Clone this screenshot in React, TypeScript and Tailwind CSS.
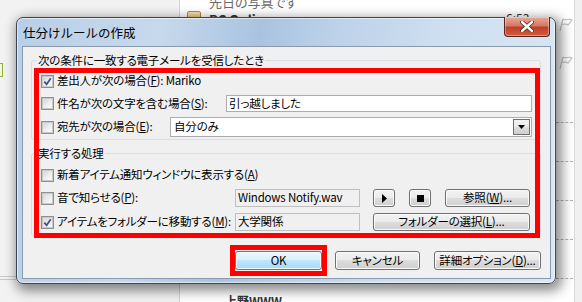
import type { ReactNode } from 'react'

/**
 * 仕分けルールの作成 dialog (Windows 7 style) over an Outlook window,
 * with red annotation boxes.
 */

function Check({ checked }: { checked?: boolean }) {
  return (
    <span className="flex h-[13px] w-[13px] shrink-0 items-center justify-center border border-[#8e8f8f] bg-[#f4f4f4]">
      <span className="flex h-[11px] w-[11px] items-center justify-center border border-[#c9c9c9] bg-[linear-gradient(135deg,#d8d8d8_0%,#eeeeee_60%,#fbfbfb_100%)]">
        {checked && (
          <svg width="9" height="9" viewBox="0 0 9 9">
            <path d="M1.3 4.6 L3.6 7.3 L7.8 1.2" fill="none" stroke="#3e5288" strokeWidth="1.7" />
          </svg>
        )}
      </span>
    </span>
  )
}

function Btn({ children, className = '' }: { children?: ReactNode; className?: string }) {
  return (
    <div
      className={`flex shrink-0 items-center justify-center rounded-[3px] border border-[#707070] bg-[linear-gradient(#f2f2f2_0%,#ebebeb_50%,#dddddd_50%,#cfcfcf_100%)] shadow-[inset_0_0_0_1px_#fbfbfb] leading-none text-black ${className}`}
    >
      {children}
    </div>
  )
}

function Label({ children }: { children: ReactNode }) {
  return <span className="ml-[3px] whitespace-nowrap leading-none">{children}</span>
}

export default function App() {
  return (
    <div className="relative h-[302px] w-[582px] overflow-hidden bg-white font-['Noto_Sans_CJK_JP',sans-serif] text-[12px] text-black [font-feature-settings:'palt']">
      {/* Outlook window behind */}
      <div className="absolute left-0 top-0 h-full w-[180px] border-r border-[#d4d4d4] bg-[#f2f2f2]" />
      <div className="absolute left-0 top-[63px] h-[14px] w-[3px] border border-l-0 border-[#8bb23a] bg-[#f6f6d8]" />
      <div className="absolute left-0 top-[276px] h-[1px] w-[16px] bg-[#c8c8c8]" />
      <div className="absolute left-0 top-[279px] h-[1px] w-[16px] bg-[#c8c8c8]" />
      <div className="absolute left-[209px] top-[-8px] text-[13px] text-[#6a6a6a]">先日の写真です</div>
      <div className="absolute left-[187px] top-[11px] h-[12px] w-[14px] rounded-[2px] border border-[#b08a3a] bg-[linear-gradient(#f6e3b0,#d9b460)]" />
      <div className="absolute left-[209px] top-[10px] text-[13px] font-bold text-[#333]">RC Online</div>
      <div className="absolute left-[506px] top-[9px] text-[12px] text-[#333]">6:53</div>
      <svg className="absolute left-[558px] top-[18px]" width="16" height="14" viewBox="0 0 16 14">
        <path d="M2 13 L5 1 M5 1 C8 3 11 0 14 2 L10 7 C8 5 6 7 4 6" fill="none" stroke="#c4c4c4" strokeWidth="1.2" />
      </svg>
      <svg className="absolute left-[558px] top-[56px]" width="16" height="14" viewBox="0 0 16 14">
        <path d="M2 13 L5 1 M5 1 C8 3 11 0 14 2 L10 7 C8 5 6 7 4 6" fill="none" stroke="#c4c4c4" strokeWidth="1.2" />
      </svg>
      {[122, 161, 200, 239, 278].map((y) => (
        <div key={y} className="absolute left-[556px] h-0 w-[17px] border-t border-dashed border-[#b4b4b4]" style={{ top: y }} />
      ))}
      <div className="absolute right-0 top-0 h-full w-[8px] border-l border-[#dadada] bg-[#f0f0f0]" />
      <div className="absolute left-[225px] top-[292px] text-[12px] font-bold text-[#333]">上野WWW</div>

      {/* Dialog */}
      <div className="absolute left-[16px] top-[17px] z-10 flex h-[267px] w-[540px] flex-col rounded-[7px] border border-[#3a4656] bg-[linear-gradient(100deg,#b9cfe7_0%,#c6d9ed_25%,#a9c3df_42%,#bcd2e9_55%,#cfe0f1_75%,#d9e7f4_100%)] shadow-[inset_0_0_0_1px_rgba(255,255,255,0.55),3px_4px_12px_3px_rgba(0,0,0,0.45)]">
        <div className="relative flex h-[28px] shrink-0 items-center pl-[6px] pt-[2px] text-[12.5px] [font-feature-settings:normal]">
          仕分けルールの作成
          <div className="absolute right-[5px] top-[-1px] flex h-[20px] w-[46px] items-center justify-center rounded-b-[4px] border border-t-0 border-[#562520] bg-[linear-gradient(#e8a898_0%,#d47a66_45%,#c0402a_55%,#d25a3e_100%)] shadow-[inset_0_0_0_1px_rgba(255,255,255,0.35)]">
            <svg width="14" height="11" viewBox="0 0 14 11">
              <path d="M2 1 L12 10 M12 1 L2 10" stroke="#4a2520" strokeWidth="4" strokeLinecap="round" />
              <path d="M2 1 L12 10 M12 1 L2 10" stroke="#ffffff" strokeWidth="2.4" strokeLinecap="round" />
            </svg>
          </div>
        </div>

        <div className="ml-[5px] mr-[4px] flex h-[233px] flex-col border border-[#8a9aae] bg-[#f0f0f0] pl-[8px] pr-[9px] pt-[5px] text-[11.5px] tracking-[-0.2px]">
          {/* conditions */}
          <fieldset className="rounded-[3px] border border-[#d5dfe5] pl-[9px] pr-[8px]">
            <legend className="ml-[-4px] px-[1px] leading-[16px]">次の条件に一致する電子メールを受信したとき</legend>
            <div className="mt-[2px] flex h-[22px] items-center">
              <Check checked />
              <Label>
                差出人が次の場合(<u>F</u>): Mariko
              </Label>
            </div>
            <div className="flex h-[23px] items-center">
              <div className="flex w-[185px] items-center">
                <Check />
                <Label>
                  件名が次の文字を含む場合(<u>S</u>):
                </Label>
              </div>
              <div className="flex h-[17px] flex-1 items-center border border-[#abadb3] bg-white pl-[2px] leading-none">
                引っ越しました
              </div>
            </div>
            <div className="flex h-[24px] items-center">
              <div className="flex w-[129px] items-center">
                <Check />
                <Label>
                  宛先が次の場合(<u>E</u>):
                </Label>
              </div>
              <div className="flex h-[20px] flex-1 items-center justify-between border border-[#abadb3] bg-white pl-[3px] pr-[1px] leading-none">
                自分のみ
                <div className="flex h-[16px] w-[17px] items-center justify-center border border-[#707070] bg-[linear-gradient(#f2f2f2_0%,#ebebeb_50%,#dddddd_50%,#cfcfcf_100%)]">
                  <svg width="7" height="4" viewBox="0 0 7 4">
                    <path d="M0 0 H7 L3.5 4 Z" fill="#000" />
                  </svg>
                </div>
              </div>
            </div>
          </fieldset>

          {/* actions */}
          <fieldset className="mt-[5px] rounded-[3px] border border-[#d5dfe5] pb-[2px] pl-[9px] pr-[8px]">
            <legend className="ml-[-4px] px-[1px] leading-[16px]">実行する処理</legend>
            <div className="mt-[3px] flex h-[22px] items-center">
              <Check />
              <Label>
                新着アイテム通知ウィンドウに表示する(<u>A</u>)
              </Label>
            </div>
            <div className="mt-[1px] flex h-[22px] items-center">
              <div className="flex w-[194px] items-center">
                <Check />
                <Label>
                  音で知らせる(<u>P</u>):
                </Label>
              </div>
              <div className="flex h-[18px] w-[125px] items-center border border-[#bfbfbf] bg-[#f0f0f0] pl-[2px] leading-none">
                Windows Notify.wav
              </div>
              <Btn className="ml-[13px] h-[18px] w-[22px]">
                <svg width="5" height="9" viewBox="0 0 5 9">
                  <path d="M0 0 L5 4.5 L0 9 Z" fill="#000" />
                </svg>
              </Btn>
              <Btn className="ml-[14px] h-[18px] w-[22px]">
                <div className="h-[7px] w-[7px] bg-black" />
              </Btn>
              <Btn className="ml-[14px] h-[18px] w-[85px]">
                参照(<u>W</u>)...
              </Btn>
            </div>
            <div className="mt-[2px] flex h-[22px] items-center">
              <div className="flex w-[194px] items-center">
                <Check checked />
                <Label>
                  アイテムをフォルダーに移動する(<u>M</u>):
                </Label>
              </div>
              <div className="flex h-[18px] w-[125px] items-center border border-[#bfbfbf] bg-[#f0f0f0] pl-[2px] leading-none">
                大学関係
              </div>
              <Btn className="ml-[13px] h-[18px] w-[157px]">
                フォルダーの選択(<u>L</u>)...
              </Btn>
            </div>
          </fieldset>

          {/* dialog buttons */}
          <div className="mt-[15px] flex justify-end">
            <div className="flex h-[19px] w-[87px] items-center justify-center rounded-[3px] border border-[#3c7fb1] bg-[linear-gradient(#eaf6fd_0%,#d9f0fc_50%,#bee6fd_50%,#a7d9f5_100%)] shadow-[inset_0_0_0_1px_#f4fbfe] leading-none">
              OK
            </div>
            <Btn className="ml-[13px] h-[19px] w-[85px]">キャンセル</Btn>
            <Btn className="ml-[14px] h-[19px] w-[107px]">
              詳細オプション(<u>D</u>)...
            </Btn>
          </div>
        </div>
      </div>

      {/* red annotation boxes */}
      <div className="absolute left-[34px] top-[68px] z-20 h-[170px] w-[506px] border-[5px] border-[#ff0000]" />
      <div className="absolute left-[230px] top-[245px] z-20 h-[31px] w-[97px] border-[5px] border-[#ff0000]" />
    </div>
  )
}
